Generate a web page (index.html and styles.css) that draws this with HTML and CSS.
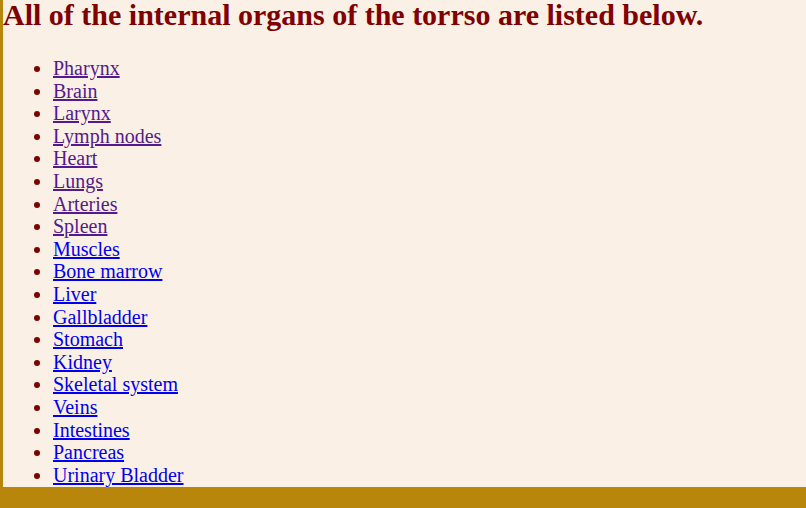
FILE: index.html
```html
<!DOCTYPE html>
<html>
<head>
<meta charset="utf-8">
<link rel="stylesheet" href="styles.css">
</head>
<body>
<div class="page">
<h1 class="title">All of the internal organs of the torrso are listed below.</h1>
<ul class="organs">
<li><a class="visited" href="#">Pharynx</a></li>
<li><a class="visited" href="#">Brain</a></li>
<li><a class="visited" href="#">Larynx</a></li>
<li><a class="visited" href="#">Lymph nodes</a></li>
<li><a class="visited" href="#">Heart</a></li>
<li><a class="visited" href="#">Lungs</a></li>
<li><a class="visited" href="#">Arteries</a></li>
<li><a class="visited" href="#">Spleen</a></li>
<li><a href="#">Muscles</a></li>
<li><a href="#">Bone marrow</a></li>
<li><a href="#">Liver</a></li>
<li><a href="#">Gallbladder</a></li>
<li><a href="#">Stomach</a></li>
<li><a href="#">Kidney</a></li>
<li><a href="#">Skeletal system</a></li>
<li><a href="#">Veins</a></li>
<li><a href="#">Intestines</a></li>
<li><a href="#">Pancreas</a></li>
<li><a href="#">Urinary Bladder</a></li>
</ul>
</div>
</body>
</html>
```
FILE: styles.css
```css
html, body {
  margin: 0;
  padding: 0;
  height: 100%;
  background: #b8860b;
  font-family: "Liberation Serif", "Times New Roman", serif;
}
.page {
  margin-left: 3px;
  background: #faf0e6;
  padding: 0 0 1px 0;
  color: #800000;
}
.title {
  font-size: 30px;
  font-weight: bold;
  margin: 0;
  line-height: 30px;
}
.organs {
  margin: 27px 0 0 10px;
  padding-left: 40px;
  font-size: 20px;
  line-height: 22.6px;
  color: #800000;
}
.organs a {
  color: #0000ee;
}
.organs a.visited {
  color: #551a8b;
}
```
